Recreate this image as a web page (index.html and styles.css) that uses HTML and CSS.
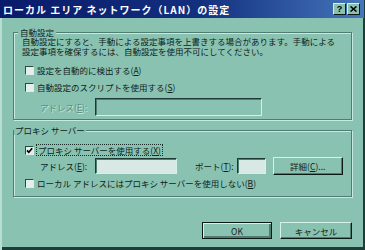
FILE: index.html
```html
<!DOCTYPE html>
<html lang="ja">
<head>
    <meta charset="UTF-8">
    <title>ローカル エリア ネットワーク (LAN) の設定</title>
    <link rel="stylesheet" href="styles.css">
</head>
<body>
    <div class="window">
        <div class="titlebar">
            <span class="title">ローカル エリア ネットワーク（LAN）の設定</span>
            <span class="tbtn help">?</span>
            <span class="tbtn close">
                <svg width="7" height="6" viewBox="0 0 7 6"><path d="M0.5 0.5 L6.5 5.5 M6.5 0.5 L0.5 5.5" stroke="#000" stroke-width="1.6"/></svg>
            </span>
        </div>

        <fieldset class="group">
            <legend>自動設定</legend>
            <p class="note">自動設定にすると、手動による設定事項を上書きする場合があります。手動による<br>設定事項を確保するには、自動設定を使用不可にしてください。</p>
            <div class="check first"><span class="box"></span>設定を自動的に検出する(<u>A</u>)</div>
            <div class="check"><span class="box"></span>自動設定のスクリプトを使用する(<u>S</u>)</div>
            <div class="row tall">
                <span class="label disabled">アドレス(<u>E</u>):</span>
                <span class="field off wide"></span>
            </div>
        </fieldset>

        <fieldset class="group proxy">
            <legend>プロキシ サーバー</legend>
            <div class="check first"><span class="box on"><svg width="7" height="7" viewBox="0 0 7 7"><path d="M1 3.4 L2.8 5.3 L6.2 1.3" fill="none" stroke="#000" stroke-width="1.7"/></svg></span><span class="focus">プロキシ サーバーを使用する(<u>X</u>)</span></div>
            <div class="row">
                <span class="label">アドレス(<u>E</u>):</span>
                <span class="field addr"></span>
                <span class="label port">ポート(<u>T</u>):</span>
                <span class="field small"></span>
                <span class="btn detail">詳細(<u>C</u>)...</span>
            </div>
            <div class="check low"><span class="box"></span>ローカル アドレスにはプロキシ サーバーを使用しない(<u>B</u>)</div>
        </fieldset>

        <div class="actions">
            <span class="btn default">OK</span>
            <span class="btn">キャンセル</span>
        </div>
    </div>
</body>
</html>
```

FILE: styles.css
```css
* { box-sizing: border-box; }
body { margin: 0; font-family: "Noto Sans CJK JP", "Noto Sans", sans-serif; font-size: 8.5px; color: #0e1e1a; }
u { text-decoration: underline; text-underline-offset: 1px; }

.window {
    width: 365px;
    height: 250px;
    background: #8ac2b2;
    display: flex;
    flex-direction: column;
    box-shadow: inset 2px 0 #b8ded2, inset -2px -3px #1f3d37;
}

.titlebar {
    height: 18px;
    display: flex;
    align-items: center;
    padding: 0 4px 0 3px;
    margin-right: 1px;
    background: linear-gradient(to right, #0a1a6a, #12307e 55%, #4676bc);
}
.title { color: #fff; font-weight: bold; font-size: 10px; letter-spacing: 1px; white-space: nowrap; flex: 1; }
.tbtn {
    width: 13px;
    height: 12px;
    display: flex;
    align-items: center;
    justify-content: center;
    background: #8ac2b2;
    border: 1px solid;
    border-color: #d4f2e8 #0c1a16 #0c1a16 #d4f2e8;
    font: bold 9px "Liberation Sans", sans-serif;
    color: #000;
}
.tbtn.close { margin-left: 1px; }

.group {
    margin: 10px 13px 0;
    padding: 0 8px 3px;
    border: 1px solid #4f7d71;
    box-shadow: 1px 1px 0 #c6eadf, inset 1px 1px 0 #c6eadf;
    min-width: 0;
}
.group legend {
    padding: 0 2px;
    margin-left: -4px;
    line-height: 9px;
    background: #8ac2b2;
}
.group.proxy { margin-top: 6px; padding-bottom: 7px; }
.group.proxy legend { margin-left: -8px; padding: 0 1px; }

.note { margin: 0; line-height: 9.5px; white-space: nowrap; }

.check { display: flex; align-items: center; height: 12px; padding-left: 3px; margin-top: 5px; white-space: nowrap; }
.check.first { margin-top: 8px; }
.proxy .check.first { margin-top: 9px; }
.check.low { margin-top: 2px; }
.box {
    width: 9px;
    height: 9px;
    margin-right: 3px;
    border: 1px solid;
    border-color: #2c4a44 #d8f0e8 #d8f0e8 #2c4a44;
    background: #e4eeeb;
    display: flex;
    align-items: center;
    justify-content: center;
}
.focus { outline: 1px dotted #1a2a26; padding: 0 1px; line-height: 10px; }

.row { display: flex; align-items: center; height: 18px; margin-top: 1px; padding-left: 18px; white-space: nowrap; }
.row.tall { margin-top: 5px; }
.label { width: 55px; }
.label.disabled { color: #5f8e82; text-shadow: 1px 1px 0 #c4e8dc; }
.label.port { width: auto; margin: 0 3px 0 18px; }

.field {
    height: 16px;
    border: 1px solid;
    border-color: #1e3a34 #d6efe8 #d6efe8 #1e3a34;
    box-shadow: inset 1px 1px 0 #4f7d71;
    background: #d8e8e4;
}
.field.off { background: #8ac2b2; height: 18px; }
.field.wide { width: 167px; }
.field.addr { width: 83px; }
.field.small { width: 29px; }

.btn {
    height: 18px;
    display: flex;
    align-items: center;
    justify-content: center;
    background: #8ac2b2;
    border: 1px solid;
    border-color: #d4f2e8 #0c1a16 #0c1a16 #d4f2e8;
    box-shadow: inset -1px -1px 0 #4f7d71;
    white-space: nowrap;
}
.btn.detail { width: 71px; margin-left: 7px; }

.actions { display: flex; justify-content: flex-end; gap: 8px; margin-top: 25px; padding-right: 13px; }
.actions .btn { width: 72px; height: 17px; }
.actions .btn.default { width: 70px; border-color: #0c1a16; box-shadow: inset 1px 1px 0 #d4f2e8, inset -2px -2px 0 #4f7d71; }
```
